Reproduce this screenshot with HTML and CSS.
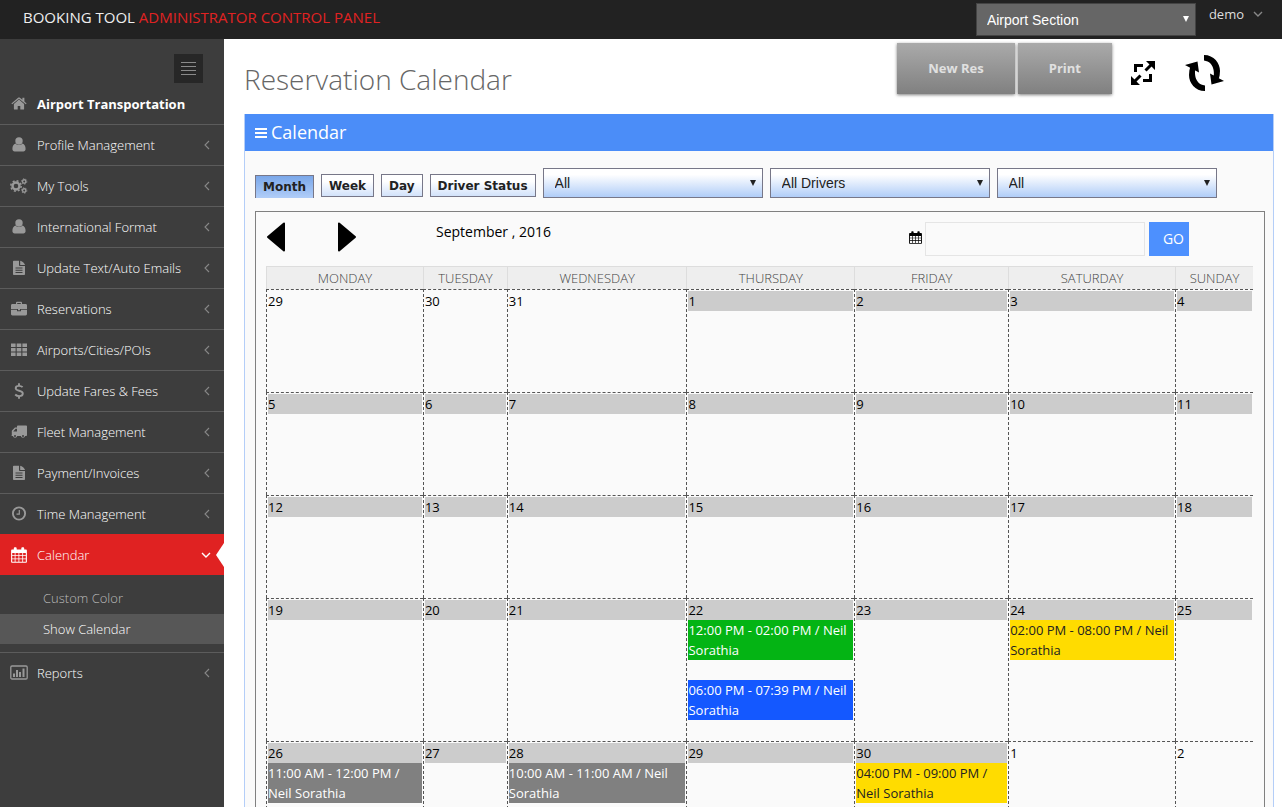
FILE: index.html
```
<!DOCTYPE html>
<html lang="en">
<head>
    <meta charset="UTF-8">
    <meta name="viewport" content="width=device-width, initial-scale=1.0">
    <title>Reservation Calendar</title>
    <link rel="stylesheet" href="styles.css">
</head>
<body>
    <!-- Shared icons -->
    <svg class="sprite" aria-hidden="true">
        <symbol id="i-left" viewBox="0 0 6 10"><path d="M5 1 1 5l4 4" fill="none" stroke="currentColor" stroke-width="1.1"/></symbol>
        <symbol id="i-down" viewBox="0 0 10 6"><path d="M1 1l4 4 4-4" fill="none" stroke="currentColor" stroke-width="1.4"/></symbol>
        <symbol id="i-home" viewBox="0 0 16 16"><path d="M8 3.600 2.900 8V13c0 .4.3.6.6.6h3.200v-3.700h2.600v3.700h3.200c.4 0 .6-.3.6-.6V8z"/><path d="M15.600 7.400 13.400 5.500V1.800h-2v2L8.900 1.700c-.5-.4-1.300-.4-1.800 0L.4 7.400l.8.9L8 2.700l6.800 5.600z"/></symbol>
        <symbol id="i-user" viewBox="0 0 16 16"><circle cx="8" cy="4" r="3.700"/><path d="M4.600 6.500c-2.200.5-3.200 2.700-3.200 5.500 0 1.500.9 2.400 2.300 2.400h8.600c1.400 0 2.300-.9 2.300-2.400 0-2.800-1-5-3.200-5.500-.9.900-2 1.600-3.400 1.600S5.500 7.400 4.600 6.500z"/></symbol>
        <symbol id="i-cogs" viewBox="0 0 18 16"><g fill="none" stroke="currentColor"><circle cx="6" cy="8" r="3.500" stroke-width="2.400"/><circle cx="6" cy="8" r="5.200" stroke-width="1.500" stroke-dasharray="2 2.080"/><circle cx="14.200" cy="3.500" r="1.700" stroke-width="1.400"/><circle cx="14.200" cy="3.500" r="2.700" stroke-width="1" stroke-dasharray="1.200 1.600"/><circle cx="14.200" cy="12.500" r="1.700" stroke-width="1.400"/><circle cx="14.200" cy="12.500" r="2.700" stroke-width="1" stroke-dasharray="1.200 1.600"/></g></symbol>
        <symbol id="i-file" viewBox="0 0 16 16"><path fill-rule="evenodd" d="M2 1.500c0-.5.3-.8.8-.8H8v4.500c0 .5.300.8.800.8H14v8.200c0 .5-.3.800-.8.800H2.800c-.5 0-.8-.3-.8-.8zM4.500 7.500v1h7v-1zM4.500 9.700v1h7v-1zM4.500 12v1h7v-1z"/><path d="M9.200.7V5H14C13.800 3.500 10.800.8 9.200.7z"/></symbol>
        <symbol id="i-case" viewBox="0 0 16 16"><path fill-rule="evenodd" d="M5 3V1.700C5 1.200 5.400.8 5.900.8h4.200c.5 0 .9.400.9.900V3h3.600c.8 0 1.400.6 1.400 1.400V8H0V4.400C0 3.600.6 3 1.400 3zm1.200 0h3.600V2H6.200z"/><path d="M7 8h2v1.200H7z"/><path d="M0 8.800h6v1.400h4V8.800h6v4.300c0 .8-.6 1.400-1.400 1.400H1.400c-.8 0-1.400-.6-1.400-1.400z"/></symbol>
        <symbol id="i-grid" viewBox="0 0 16 16"><path d="M0 1.500h4.600v3.400H0zM5.700 1.500h4.600v3.400H5.700zM11.400 1.500H16v3.400h-4.600zM0 6h4.600v3.400H0zM5.700 6h4.600v3.400H5.700zM11.400 6H16v3.400h-4.600zM0 10.500h4.600v3.400H0zM5.700 10.500h4.600v3.400H5.700zM11.400 10.500H16v3.400h-4.600z"/></symbol>
        <symbol id="i-dollar" viewBox="0 0 16 16"><path d="M11.600 4.200C10.900 3.500 9.600 2.900 8 2.900c-2 0-3.300.9-3.300 2.300 0 3.400 7.100 1.700 7.100 5.300 0 1.500-1.500 2.600-3.600 2.600-1.800 0-3.100-.7-4-1.600M8 .3V3m0 10v2.700" fill="none" stroke="currentColor" stroke-width="1.900"/></symbol>
        <symbol id="i-truck" viewBox="0 0 16 16"><path fill-rule="evenodd" d="M6.800 1.500H15.200c.5 0 .8.300.8.800v9c0 .5-.3.800-1 .8h-.9a2.200 2.200 0 0 1-4.300 0H6.200a2.200 2.200 0 0 1-4.300 0H.3c.4-.3.500-.5.500-1V7.300c0-.5.100-.8.400-1.100L3.500 3.900c.3-.3.600-.4 1-.4H6V2.300c0-.5.300-.8.800-.8zM2.200 7.500H6V4.700H4.600z"/><circle cx="4" cy="11.900" r="1" fill="#3d3d3d"/><circle cx="12" cy="11.900" r="1" fill="#3d3d3d"/></symbol>
        <symbol id="i-clock" viewBox="0 0 16 16"><circle cx="8" cy="7.500" r="6.100" fill="none" stroke="currentColor" stroke-width="1.900"/><path d="M8.300 4v4.200H5.500" fill="none" stroke="currentColor" stroke-width="1.200"/></symbol>
        <symbol id="i-cal" viewBox="0 0 16 16"><path fill-rule="evenodd" d="M1.300 2.500h1.500V1.400C2.800.7 3.300.2 4 .2h.5c.7 0 1.200.5 1.200 1.200v1.100h4.600V1.400c0-.7.500-1.200 1.200-1.200h.5c.7 0 1.200.5 1.200 1.200v1.100h1.500c.7 0 1.200.5 1.200 1.200v11c0 .6-.5 1.100-1.200 1.100H1.300c-.7 0-1.200-.5-1.200-1.100v-11c0-.7.5-1.200 1.200-1.200zM1.200 6v2.200h2.500V6zm3.300 0v2.200h3V6zm3.800 0v2.200h3V6zm3.800 0v2.200h2.700V6zM1.200 9v2.500h2.500V9zm3.300 0v2.500h3V9zm3.800 0v2.500h3V9zm3.800 0v2.500h2.700V9zM1.200 12.300v2.400h2.500v-2.400zm3.300 0v2.400h3v-2.400zm3.800 0v2.400h3v-2.400zm3.800 0v2.400h2.700v-2.400z"/></symbol>
        <symbol id="i-chart" viewBox="0 0 18 16"><rect x=".8" y="1" width="16.400" height="13" rx="1.200" fill="none" stroke="currentColor" stroke-width="1.300"/><path d="M3 8.500h2V12H3zM6 5h2v7H6zM9 7h2v5H9zM12.500 3.500h2V12h-2z"/></symbol>
    </svg>

    <header class="topbar">
        <a class="brand" href="#">BOOKING TOOL <span>ADMINISTRATOR CONTROL PANEL</span></a>
        <div class="section-select select-box">
            <select aria-label="Section">
                <option>Airport Section</option>
            </select>
        </div>
        <button class="user-menu">demo <svg class="down"><use href="#i-down"/></svg></button>
    </header>

    <div class="layout">
        <nav class="sidebar">
            <button class="toggler" aria-label="Toggle menu">
                <svg width="15" height="13"><path d="M0 .5h15M0 4.500h15M0 8.500h15M0 12.500h15" stroke="#8a8a8a"/></svg>
            </button>
            <ul class="menu">
                <li><a class="home" href="#"><svg class="icon"><use href="#i-home"/></svg>Airport Transportation</a></li>
                <li><a href="#"><svg class="icon"><use href="#i-user"/></svg>Profile Management<svg class="arrow"><use href="#i-left"/></svg></a></li>
                <li><a href="#"><svg class="icon"><use href="#i-cogs"/></svg>My Tools<svg class="arrow"><use href="#i-left"/></svg></a></li>
                <li><a href="#"><svg class="icon"><use href="#i-user"/></svg>International Format<svg class="arrow"><use href="#i-left"/></svg></a></li>
                <li><a href="#"><svg class="icon"><use href="#i-file"/></svg>Update Text/Auto Emails<svg class="arrow"><use href="#i-left"/></svg></a></li>
                <li><a href="#"><svg class="icon"><use href="#i-case"/></svg>Reservations<svg class="arrow"><use href="#i-left"/></svg></a></li>
                <li><a href="#"><svg class="icon"><use href="#i-grid"/></svg>Airports/Cities/POIs<svg class="arrow"><use href="#i-left"/></svg></a></li>
                <li><a href="#"><svg class="icon"><use href="#i-dollar"/></svg>Update Fares &amp; Fees<svg class="arrow"><use href="#i-left"/></svg></a></li>
                <li><a href="#"><svg class="icon"><use href="#i-truck"/></svg>Fleet Management<svg class="arrow"><use href="#i-left"/></svg></a></li>
                <li><a href="#"><svg class="icon"><use href="#i-file"/></svg>Payment/Invoices<svg class="arrow"><use href="#i-left"/></svg></a></li>
                <li><a href="#"><svg class="icon"><use href="#i-clock"/></svg>Time Management<svg class="arrow"><use href="#i-left"/></svg></a></li>
                <li class="active">
                    <a href="#"><svg class="icon"><use href="#i-cal"/></svg>Calendar<svg class="arrow open"><use href="#i-down"/></svg></a>
                    <ul class="submenu">
                        <li><a href="#">Custom Color</a></li>
                        <li><a class="current" href="#">Show Calendar</a></li>
                    </ul>
                </li>
                <li><a href="#"><svg class="icon"><use href="#i-chart"/></svg>Reports<svg class="arrow"><use href="#i-left"/></svg></a></li>
            </ul>
        </nav>

        <main class="content">
            <div class="page-head">
                <h1>Reservation Calendar</h1>
                <div class="actions">
                    <button class="big-btn">New Res</button>
                    <button class="big-btn">Print</button>
                </div>
                <button class="icon-btn" aria-label="Full screen">
                    <svg width="26" height="26" viewBox="0 0 26 26"><path d="M5.500 12V5.500H13M20.500 14v6.500H13" fill="none" stroke="#000" stroke-width="3"/><path d="M15.500 10.500 21 5M10.500 15.500 5 21" stroke="#000" stroke-width="3"/><path d="M16 1h9v9l-2.500-2.500-4-4zM1 16v9h9l-2.500-2.500-4-4z"/></svg>
                </button>
                <button class="icon-btn" aria-label="Refresh">
                    <svg width="40" height="38" viewBox="0 0 40 38"><path d="M19 1c10 0 16 8 16 16 0 3-.5 6-1.500 9l-5-1.500C29.500 20 30 8 19 6.500zM39 27l-12.500 3.500L25 19.500zM20 37C10 37 4 29 4 21c0-3 .5-6 1.500-9l5 1.500C9.500 18 9 30 20 31.500zM0 11l12.500-3.500L14 18.500z"/></svg>
                </button>
            </div>

            <section class="panel">
                <h2 class="panel-title">
                    <svg width="12" height="10"><path d="M0 1h12M0 5h12M0 9h12" stroke="#fff" stroke-width="2"/></svg>
                    Calendar
                </h2>
                <div class="panel-body">
                    <div class="filters">
                        <button class="tab selected">Month</button>
                        <button class="tab">Week</button>
                        <button class="tab">Day</button>
                        <button class="tab">Driver Status</button>
                        <div class="select-box">
                            <select aria-label="Status"><option>All</option></select>
                        </div>
                        <div class="select-box">
                            <select aria-label="Driver"><option>All Drivers</option></select>
                        </div>
                        <div class="select-box">
                            <select aria-label="Vehicle"><option>All</option></select>
                        </div>
                    </div>

                    <div class="calendar">
                        <div class="cal-nav">
                            <div class="arrows">
                                <button aria-label="Previous month"><svg width="20" height="30"><path d="M2 15 18 1.500v27z" stroke="#000" stroke-width="2" stroke-linejoin="round"/></svg></button>
                                <button aria-label="Next month"><svg width="20" height="30"><path d="M18 15 2 1.500v27z" stroke="#000" stroke-width="2" stroke-linejoin="round"/></svg></button>
                            </div>
                            <div class="month-name">September , 2016</div>
                            <form class="goto">
                                <label for="date" aria-label="Date"><svg width="13" height="13"><use href="#i-cal"/></svg></label>
                                <input type="text" id="date">
                                <button type="button">GO</button>
                            </form>
                        </div>

                        <table>
                            <colgroup>
                                <col class="mon"><col class="tue"><col class="wed"><col class="thu"><col class="fri"><col class="sat"><col>
                            </colgroup>
                            <thead>
                                <tr><th>MONDAY</th><th>TUESDAY</th><th>WEDNESDAY</th><th>THURSDAY</th><th>FRIDAY</th><th>SATURDAY</th><th>SUNDAY</th></tr>
                            </thead>
                            <tbody>
                                <tr>
                                    <td class="other"><div class="day">29</div></td>
                                    <td class="other"><div class="day">30</div></td>
                                    <td class="other"><div class="day">31</div></td>
                                    <td><div class="day">1</div></td>
                                    <td><div class="day">2</div></td>
                                    <td><div class="day">3</div></td>
                                    <td><div class="day">4</div></td>
                                </tr>
                                <tr>
                                    <td><div class="day">5</div></td>
                                    <td><div class="day">6</div></td>
                                    <td><div class="day">7</div></td>
                                    <td><div class="day">8</div></td>
                                    <td><div class="day">9</div></td>
                                    <td><div class="day">10</div></td>
                                    <td><div class="day">11</div></td>
                                </tr>
                                <tr>
                                    <td><div class="day">12</div></td>
                                    <td><div class="day">13</div></td>
                                    <td><div class="day">14</div></td>
                                    <td><div class="day">15</div></td>
                                    <td><div class="day">16</div></td>
                                    <td><div class="day">17</div></td>
                                    <td><div class="day">18</div></td>
                                </tr>
                                <tr>
                                    <td><div class="day">19</div></td>
                                    <td><div class="day">20</div></td>
                                    <td><div class="day">21</div></td>
                                    <td>
                                        <div class="day">22</div>
                                        <div class="event green">12:00 PM - 02:00 PM / Neil Sorathia</div>
                                        <div class="event blue">06:00 PM - 07:39 PM / Neil Sorathia</div>
                                    </td>
                                    <td><div class="day">23</div></td>
                                    <td>
                                        <div class="day">24</div>
                                        <div class="event yellow">02:00 PM - 08:00 PM / Neil Sorathia</div>
                                    </td>
                                    <td><div class="day">25</div></td>
                                </tr>
                                <tr>
                                    <td>
                                        <div class="day">26</div>
                                        <div class="event gray">11:00 AM - 12:00 PM / Neil Sorathia</div>
                                    </td>
                                    <td><div class="day">27</div></td>
                                    <td>
                                        <div class="day">28</div>
                                        <div class="event gray">10:00 AM - 11:00 AM / Neil Sorathia</div>
                                    </td>
                                    <td><div class="day">29</div></td>
                                    <td>
                                        <div class="day">30</div>
                                        <div class="event yellow">04:00 PM - 09:00 PM / Neil Sorathia</div>
                                    </td>
                                    <td class="other"><div class="day">1</div></td>
                                    <td class="other"><div class="day">2</div></td>
                                </tr>
                            </tbody>
                        </table>
                    </div>
                </div>
            </section>
        </main>
    </div>
</body>
</html>
```
FILE: styles.css
```
* {
    box-sizing: border-box;
}
body {
    display: flex;
    flex-direction: column;
    height: 100vh;
    margin: 0;
    overflow: hidden;
    background-color: #fff;
    color: #000;
    font-family: 'Open Sans', sans-serif;
    font-size: 13px;
    line-height: 20px;
}
button, input, select {
    margin: 0;
    border: none;
    border-radius: 0;
    font-family: inherit;
    font-size: inherit;
}
button {
    padding: 0;
    background: none;
    cursor: pointer;
}
a {
    color: inherit;
    text-decoration: none;
}
ul {
    margin: 0;
    padding: 0;
    list-style: none;
}
svg {
    display: block;
    flex: none;
    fill: currentColor;
}
.sprite {
    position: absolute;
    width: 0;
    height: 0;
}

/* Top bar */
.topbar {
    display: flex;
    flex: none;
    align-items: flex-start;
    padding: 3px 19px 3px 23px;
    background-color: #222;
    color: #ddd;
}
.brand {
    margin-right: auto;
    padding-top: 3px;
    color: #eee;
    font-size: 15px;
    line-height: 22px;
}
.brand span {
    color: #e02222;
}
.select-box {
    position: relative;
    width: 220px;
}
.select-box::after {
    content: "";
    position: absolute;
    top: 12px;
    right: 7px;
    border: 3px solid transparent;
    border-top: 6px solid #222;
    border-bottom: none;
    pointer-events: none;
}
.select-box select {
    display: block;
    width: 100%;
    height: 30px;
    padding: 0 11px;
    border: 1px solid #778;
    background: linear-gradient(#fff 20%, #b0cdf8);
    color: #222;
    font-family: 'Liberation Sans', sans-serif;
    font-size: 14px;
    appearance: none;
}
.section-select select {
    height: 33px;
    padding: 0 10px;
    border-color: #444;
    background: #666;
    color: #fff;
}
.section-select::after {
    top: 13px;
    border-top-color: #fff;
}
.user-menu {
    display: flex;
    align-items: center;
    gap: 9px;
    margin-left: 13px;
    color: #ddd;
    line-height: 22px;
}
.down {
    width: 10px;
    height: 6px;
    color: #888;
}

/* Sidebar */
.layout {
    display: flex;
    flex: 1;
    min-height: 0;
}
.sidebar {
    flex: none;
    width: 224px;
    padding-top: 15px;
    background-color: #3d3d3d;
    color: #fff;
    font-weight: 300;
}
.toggler {
    display: flex;
    align-items: center;
    justify-content: center;
    width: 29px;
    height: 29px;
    margin: 0 21px 0 auto;
    background-color: #272727;
}
.menu > li + li {
    border-top: 1px solid #5c5c5c;
}
.menu > li > a {
    display: flex;
    align-items: center;
    height: 40px;
    padding: 0 14px 0 10px;
}
.menu > li > .home {
    height: 41px;
    color: #fff;
    font-weight: 700;
}
.icon {
    width: 18px;
    height: 16px;
    margin-right: 9px;
    color: #999;
}
.arrow {
    width: 6px;
    height: 10px;
    margin-left: auto;
    color: #888;
}
.menu > .active {
    border-top-color: #e02222;
}
.active > a {
    position: relative;
    background-color: #e02222;
}
.active > a::after {
    content: "";
    position: absolute;
    top: 8px;
    right: 0;
    border: 12px solid transparent;
    border-right: 8px solid #fff;
    border-left: none;
}
.active .icon, .active .open {
    color: #fff;
}
.open {
    width: 10px;
    height: 6px;
    margin-right: -1px;
}
.submenu {
    padding: 8px 0;
}
.submenu li + li {
    margin-top: 1px;
}
.submenu a {
    display: block;
    padding: 5px 0 5px 43px;
    color: #bbb;
}
.submenu .current {
    background-color: #575757;
    color: #fff;
}

/* Page heading */
.content {
    flex: 1;
    min-width: 0;
    padding: 0 8px 20px 20px;
    overflow-y: auto;
    scrollbar-width: none;
}
.page-head {
    display: flex;
    align-items: flex-start;
    height: 75px;
    padding: 4px 49px 0 0;
}
h1 {
    margin: 0 auto 0 0;
    color: #666;
    font-size: 28px;
    font-weight: 300;
    line-height: 72px;
}
.actions {
    display: flex;
    gap: 3px;
}
.big-btn {
    height: 51px;
    padding: 0 31px 2px;
    background: linear-gradient(#aaa, #808080);
    box-shadow: 0 1px 3px rgba(0, 0, 0, 0.5);
    color: #e0e0e0;
    font-weight: 700;
}
.icon-btn {
    display: flex;
    align-items: center;
    height: 60px;
    margin-left: 18px;
}
.icon-btn + .icon-btn {
    margin-left: 29px;
}

/* Panel */
.panel {
    border: 1px solid #b4cef8;
    border-top: none;
    background-color: #fafafa;
}
.panel-title {
    display: flex;
    align-items: center;
    gap: 4px;
    margin: 0;
    padding: 0 10px;
    background-color: #4b8df8;
    color: #fff;
    font-size: 18px;
    font-weight: 400;
    line-height: 37px;
}
.panel-body {
    padding: 17px 8px 10px 10px;
}
.filters {
    display: flex;
    align-items: flex-end;
    gap: 7px;
    margin-bottom: 13px;
}
.tab {
    height: 23px;
    margin-bottom: 1px;
    padding: 0 7px;
    border: 1px solid #778;
    background: linear-gradient(#fff 30%, #d2e2fa);
    color: #222;
    font-family: 'DejaVu Sans', sans-serif;
    font-size: 12px;
    font-weight: 700;
}
.tab.selected {
    margin-bottom: 0;
    border-bottom: none;
    background: linear-gradient(#7aa7e9, #b0cdf8);
}

/* Calendar */
.calendar {
    padding: 0 11px 10px 10px;
    border: 1px solid #808080;
}
.cal-nav {
    display: flex;
    align-items: flex-start;
    height: 54px;
    padding: 10px 64px 0 0;
}
.arrows {
    display: flex;
    gap: 51px;
    width: 170px;
}
.month-name {
    font-size: 14px;
}
.goto {
    display: flex;
    align-items: center;
    gap: 3px;
    margin-left: auto;
}
.goto label {
    padding-bottom: 4px;
}
.goto input {
    width: 220px;
    height: 34px;
    padding: 6px 12px;
    border: 1px solid #e5e5e5;
    background-color: #fafafa;
}
.goto button {
    height: 34px;
    margin-left: 1px;
    padding: 0 5px 1px 14px;
    background-color: #4d90fe;
    color: #fff;
    font-size: 14px;
}
table {
    width: 100%;
    border-collapse: separate;
    border-spacing: 0;
    table-layout: fixed;
}
.mon {
    width: 15.9%;
}
.tue {
    width: 8.5%;
}
.wed {
    width: 18.2%;
}
.thu {
    width: 17%;
}
.fri {
    width: 15.6%;
}
.sat {
    width: 16.9%;
}
th {
    height: 23px;
    padding: 0;
    border-top: 1px solid #ddd;
    border-left: 1px solid #ddd;
    background-color: #eee;
    color: #444;
    font-weight: 300;
}
td {
    height: 103px;
    padding: 1px;
    border-top: 1px dashed #555;
    border-left: 1px dashed #555;
    vertical-align: top;
}
.day {
    background-color: #ccc;
}
.other .day {
    background: none;
}
.event {
    margin-bottom: 20px;
    color: #fff;
}
.green {
    background-color: #04b414;
}
.blue {
    background-color: #1458ff;
}
.gray {
    background-color: #808080;
}
.yellow {
    background-color: #ffdc00;
    color: #222;
}
```
